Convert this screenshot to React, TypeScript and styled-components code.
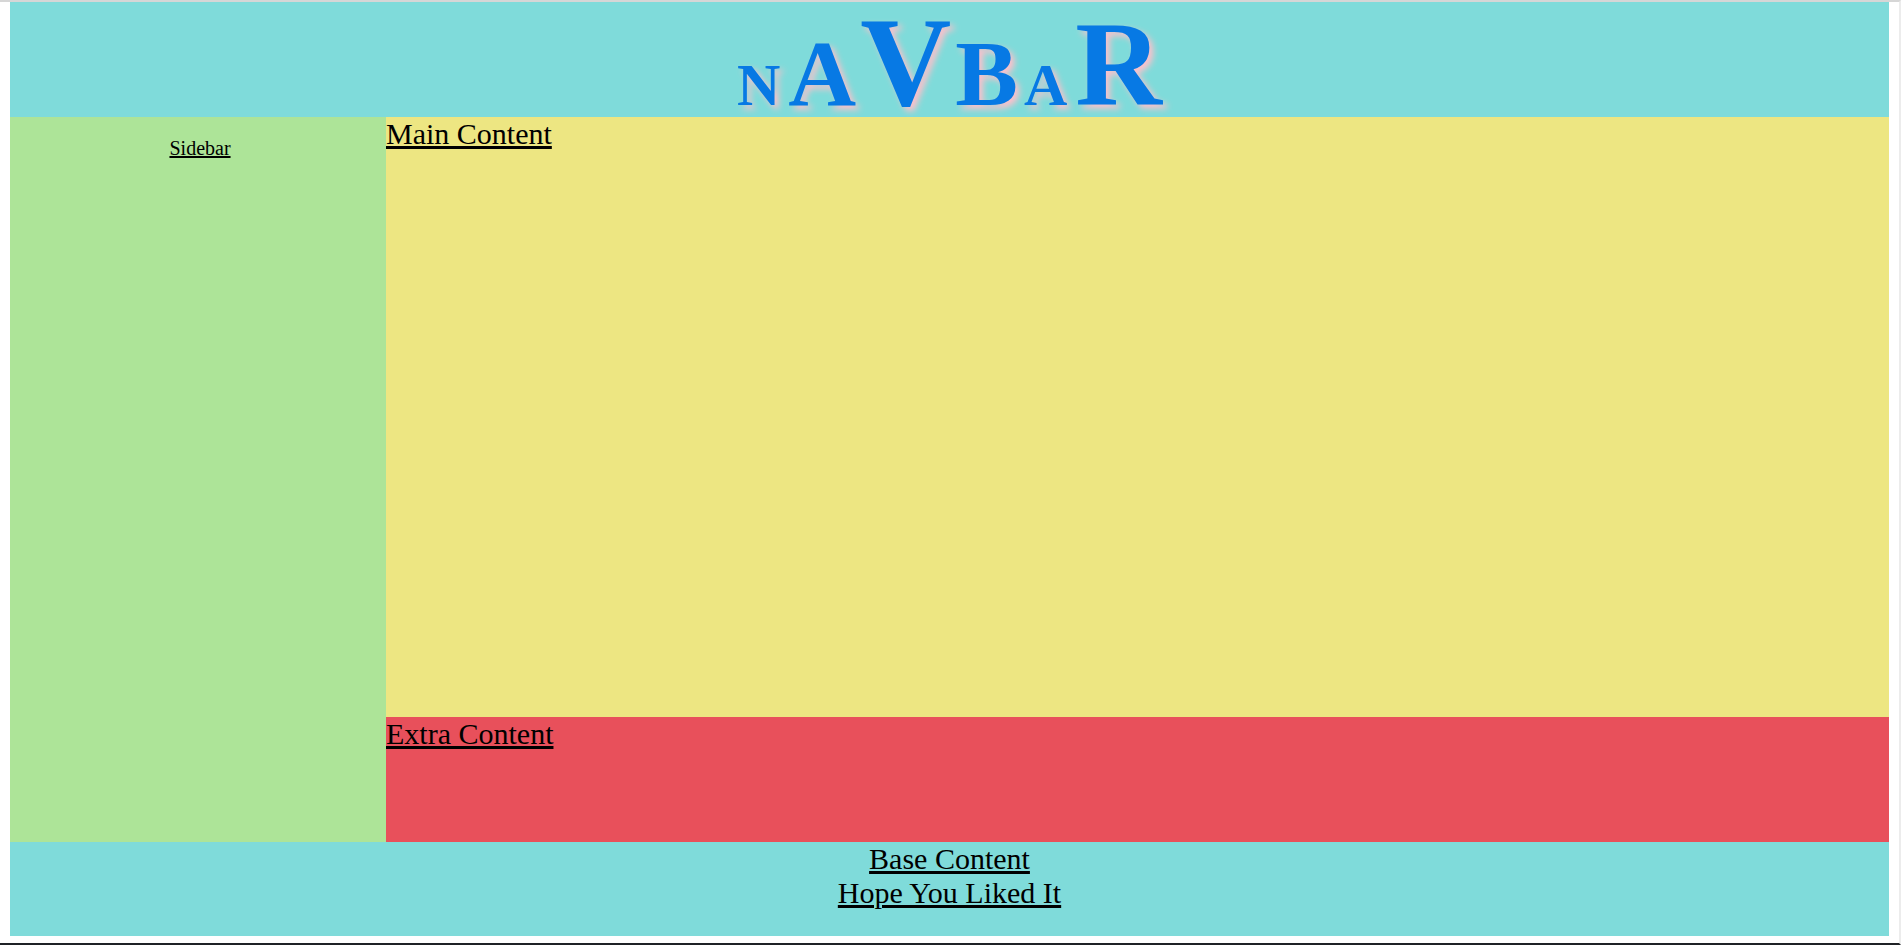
import React from "react";
import styled, { createGlobalStyle } from "styled-components";

const GlobalStyle = createGlobalStyle`
  html, body {
    margin: 0;
    padding: 0;
    background: #ffffff;
  }
  body {
    font-family: "Liberation Serif", "Times New Roman", serif;
  }
  * {
    box-sizing: border-box;
  }
`;

const Page = styled.div`
  min-height: 100vh;
  display: flex;
  flex-direction: column;
  padding: 0 10px;
  border-top: 2px solid #d6d6d6;
  border-right: 2px solid #ececec;
  border-bottom: 2px solid #1f2226;
`;

const Layout = styled.div`
  display: grid;
  grid-template-columns: 376px 1fr;
  grid-template-rows: 115px 600px 125px 94px;
  grid-template-areas:
    "header header"
    "sidebar main"
    "sidebar extra"
    "footer footer";
`;

const Header = styled.header`
  grid-area: header;
  background: #7fdbda;
  display: flex;
  justify-content: center;
  align-items: flex-start;
`;

const Title = styled.h1`
  margin: 7px 0 0;
  display: flex;
  align-items: baseline;
  font-weight: bold;
  color: #0779e4;
  text-shadow: 4px 4px 6px pink;
`;

const Letter = styled.span<{ $size: number; $gap: number }>`
  font-size: ${(p) => p.$size}px;
  line-height: 0.85;
  margin-right: ${(p) => p.$gap}px;
`;

const Sidebar = styled.aside`
  grid-area: sidebar;
  background: #ade498;
  text-align: center;
  padding-left: 4px;
`;

const SideText = styled.p`
  margin: 20px 0 0;
  font-size: 20px;
  text-decoration: underline;
  color: #000;
`;

const Panel = styled.section<{ $bg: string; $area: string }>`
  grid-area: ${(p) => p.$area};
  background: ${(p) => p.$bg};
`;

const BigText = styled.div`
  font-size: 30px;
  text-decoration: underline;
  color: #000;
`;

const Footer = styled.footer`
  grid-area: footer;
  background: #7fdbda;
  text-align: center;
`;

const Spacer = styled.div`
  flex: 1;
`;

export default function App() {
  return (
    <>
      <GlobalStyle />
      <Page>
        <Layout>
          <Header>
            <Title>
              <Letter $size={60} $gap={8}>N</Letter>
              <Letter $size={94} $gap={4}>A</Letter>
              <Letter $size={126} $gap={4}>V</Letter>
              <Letter $size={94} $gap={6}>B</Letter>
              <Letter $size={60} $gap={8}>A</Letter>
              <Letter $size={120} $gap={0}>R</Letter>
            </Title>
          </Header>
          <Sidebar>
            <SideText>Sidebar</SideText>
          </Sidebar>
          <Panel $area="main" $bg="#ede682">
            <BigText>Main Content</BigText>
          </Panel>
          <Panel $area="extra" $bg="#e8505b">
            <BigText>Extra Content</BigText>
          </Panel>
          <Footer>
            <BigText>Base Content</BigText>
            <BigText>Hope You Liked It</BigText>
          </Footer>
        </Layout>
        <Spacer />
      </Page>
    </>
  );
}
